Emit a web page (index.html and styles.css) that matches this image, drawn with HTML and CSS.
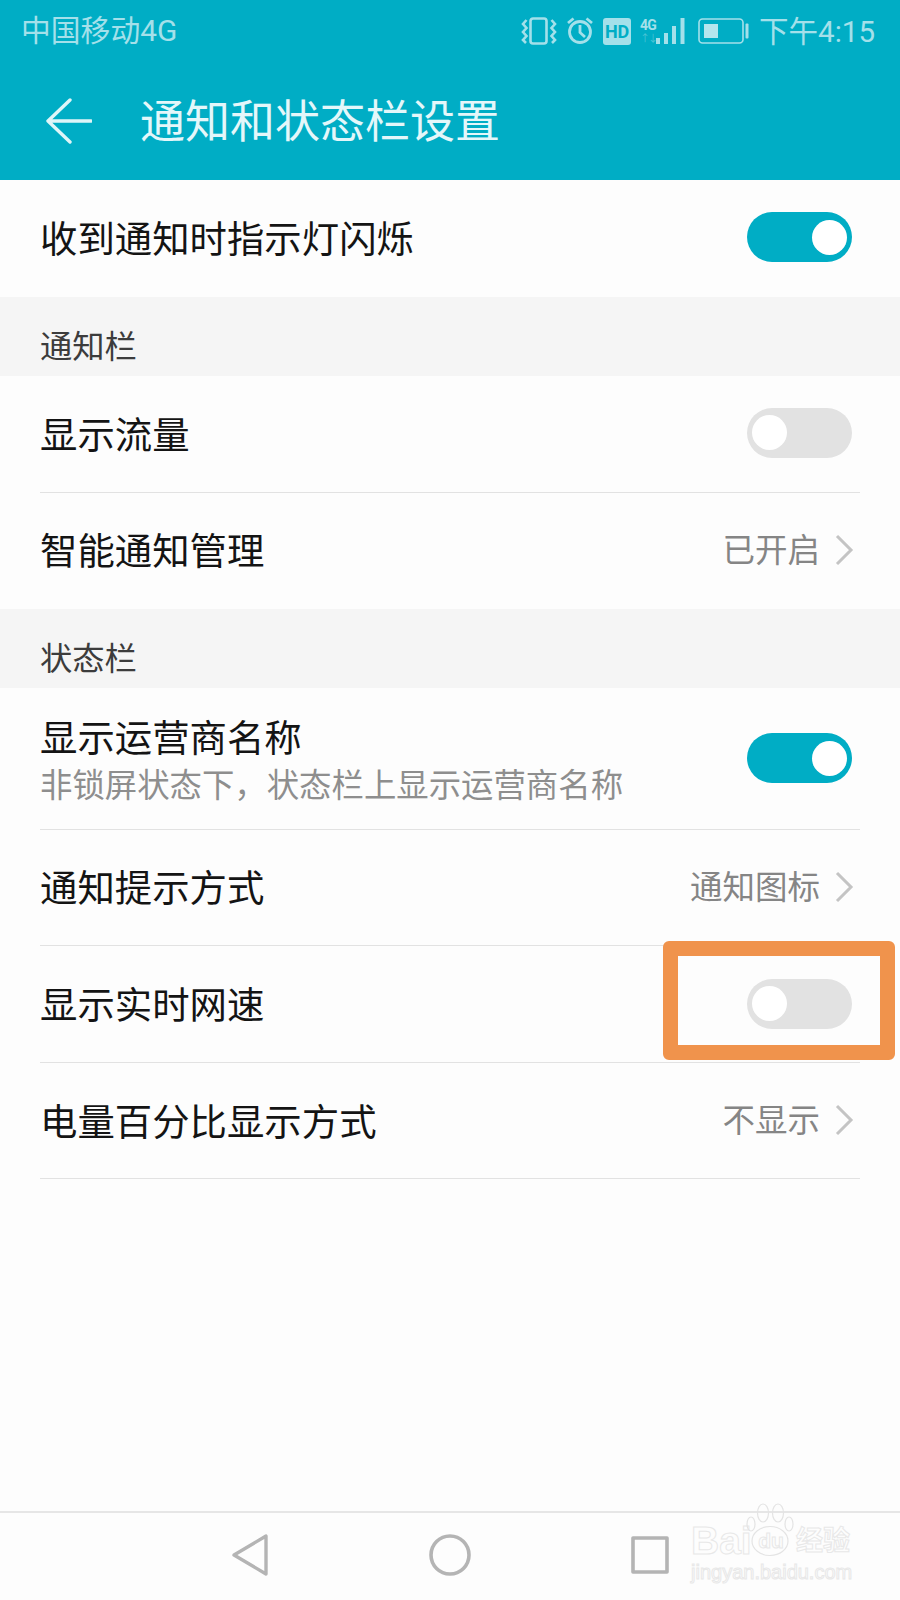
FILE: index.html
```html
<!DOCTYPE html>
<html lang="zh">
<head>
<meta charset="utf-8">
<title>通知和状态栏设置</title>
<link rel="stylesheet" href="styles.css">
</head>
<body>
<div class="app">
  <header class="head">
    <div class="status">
      <span class="carrier">中国移动4G</span>
      <div class="status-right">
        <svg class="ic-vib" width="36" height="28" viewBox="0 0 36 28" fill="none" stroke="#a4e0ea" stroke-width="2.600">
          <rect x="9.500" y="1.500" width="16" height="25" rx="2.500"/>
          <path d="M5.500 3 L2 7 L5.500 11 L2 15 L5.500 19 L2 23 L5 26"/>
          <path d="M30.500 3 L34 7 L30.500 11 L34 15 L30.500 19 L34 23 L31 26"/>
        </svg>
        <svg class="ic-alarm" width="28" height="28" viewBox="0 0 28 28" fill="none" stroke="#a4e0ea" stroke-width="2.800">
          <circle cx="14" cy="15" r="10.500"/>
          <path d="M14 8 V15.500 L19 20"/>
          <path d="M2 6 L7.500 1.500 M26 6 L20.500 1.500"/>
        </svg>
        <span class="hd">HD</span>
        <div class="signal">
          <div class="net"><span class="net-g">4G</span><span class="net-a">↑↓</span></div>
          <svg width="29" height="28" viewBox="0 0 29 28" fill="#a4e0ea">
            <rect x="0" y="21" width="4" height="6"/>
            <rect x="8" y="16" width="4" height="11"/>
            <rect x="16" y="9" width="4" height="18"/>
            <rect x="24.500" y="1" width="4" height="26"/>
          </svg>
        </div>
        <svg class="ic-bat" width="51" height="26" viewBox="0 0 51 26" fill="none">
          <rect x="1" y="1" width="44" height="24" rx="3.500" stroke="#a4e0ea" stroke-width="1.600"/>
          <rect x="6" y="6" width="14" height="14" fill="#b4e6ee"/>
          <rect x="47.500" y="5.500" width="3" height="15" rx="1" fill="#a4e0ea"/>
        </svg>
        <span class="clock">下午4:15</span>
      </div>
    </div>
    <div class="bar">
      <svg class="back" width="46" height="46" viewBox="0 0 46 46" fill="none" stroke="#dff5f8" stroke-width="3.400" stroke-linecap="round" stroke-linejoin="round">
        <path d="M24 2 L2 23 L24 44 M3 23 H45"/>
      </svg>
      <span class="title">通知和状态栏设置</span>
    </div>
  </header>

  <main class="list">
    <div class="row row-top">
      <span class="label">收到通知时指示灯闪烁</span>
      <span class="sw sw-on"><i class="knob"></i></span>
    </div>

    <h2 class="section">通知栏</h2>
    <div class="row row-line">
      <span class="label">显示流量</span>
      <span class="sw"><i class="knob"></i></span>
    </div>
    <div class="row">
      <span class="label">智能通知管理</span>
      <span class="value">已开启<svg class="chev" width="19" height="32" viewBox="0 0 19 32" fill="none" stroke="#c4c4c4" stroke-width="3"><path d="M2 2 L16 16 L2 30"/></svg></span>
    </div>

    <h2 class="section">状态栏</h2>
    <div class="row row-tall row-line">
      <div class="stack">
        <span class="label">显示运营商名称</span>
        <span class="sub">非锁屏状态下，状态栏上显示运营商名称</span>
      </div>
      <span class="sw sw-on"><i class="knob"></i></span>
    </div>
    <div class="row row-line">
      <span class="label">通知提示方式</span>
      <span class="value">通知图标<svg class="chev" width="19" height="32" viewBox="0 0 19 32" fill="none" stroke="#c4c4c4" stroke-width="3"><path d="M2 2 L16 16 L2 30"/></svg></span>
    </div>
    <div class="row row-line">
      <span class="label">显示实时网速</span>
      <span class="sw sw-low"><i class="knob"></i></span>
    </div>
    <div class="row row-line">
      <span class="label label-low">电量百分比显示方式</span>
      <span class="value">不显示<svg class="chev" width="19" height="32" viewBox="0 0 19 32" fill="none" stroke="#c4c4c4" stroke-width="3"><path d="M2 2 L16 16 L2 30"/></svg></span>
    </div>
  </main>

  <nav class="nav">
    <svg width="38" height="44" viewBox="0 0 38 44" fill="none" stroke="#b4b4b4" stroke-width="3.400" stroke-linejoin="round"><path d="M35 3 V41 L3 22 Z"/></svg>
    <svg width="42" height="42" viewBox="0 0 42 42" fill="none" stroke="#b4b4b4" stroke-width="3.600"><circle cx="21" cy="21" r="19"/></svg>
    <svg width="38" height="38" viewBox="0 0 38 38" fill="none" stroke="#b4b4b4" stroke-width="3.600" stroke-linejoin="round"><rect x="2" y="2" width="34" height="34"/></svg>
  </nav>

  <div class="mark" aria-hidden="true"></div>
  <div class="wm">
    <svg class="paw" width="48" height="54" viewBox="0 0 48 54" fill="none" stroke="#e4e4e4" stroke-width="1.200">
      <ellipse cx="17" cy="10" rx="5.500" ry="9"/>
      <ellipse cx="32" cy="10" rx="5.500" ry="9"/>
      <ellipse cx="5" cy="21" rx="4" ry="7"/>
      <ellipse cx="43" cy="21" rx="4" ry="7"/>
      <ellipse cx="24" cy="38" rx="18" ry="14.500"/>
    </svg>
    <div class="wm-top"><span class="wm-bai">Bai</span><span class="wm-du">du</span><span class="wm-cn">经验</span></div>
    <div class="wm-url">jingyan.baidu.com</div>
  </div>
</div>
</body>
</html>
```

FILE: styles.css
```css
* { box-sizing: border-box; }
html, body { margin: 0; padding: 0; }
body {
  width: 900px;
  height: 1600px;
  overflow: hidden;
  font-family: Roboto, "Noto Sans CJK SC", sans-serif;
  background: #fdfdfd;
}
.app {
  position: relative;
  width: 900px;
  height: 1600px;
  display: flex;
  flex-direction: column;
  background: #fdfdfd;
}
.head {
  height: 180px;
  background: #00adc5;
  display: flex;
  flex-direction: column;
  flex: none;
}
.status {
  height: 62px;
  padding: 0 25px 0 21px;
  display: flex;
  align-items: center;
  justify-content: space-between;
  color: #a4e0ea;
}
.carrier { font-size: 29.800px; line-height: 38px; }
.status-right { display: flex; align-items: center; }
.ic-vib { margin-right: 9px; }
.ic-alarm { margin-right: 9px; }
.hd {
  width: 28px;
  height: 27px;
  margin-right: 9px;
  border-radius: 3px;
  background: #a4e0ea;
  color: #00adc5;
  font-size: 18px;
  font-weight: 700;
  line-height: 27px;
  text-align: center;
}
.signal { display: flex; align-items: flex-end; margin-right: 13px; }
.net { display: flex; flex-direction: column; width: 16px; }
.net-g { font-size: 14px; line-height: 15px; font-weight: 700; letter-spacing: -1px; }
.net-a { font-size: 10px; line-height: 12px; opacity: .45; letter-spacing: -2px; }
.ic-bat { margin-right: 10px; }
.clock { padding-top: 2px; font-size: 29.500px; line-height: 38px; }
.bar {
  flex: 1;
  display: flex;
  align-items: center;
  padding: 0 0 0 46px;
}
.back { flex: none; margin-right: 48px; }
.title { margin-top: 4px; color: #e4f7fa; font-size: 45px; line-height: 56px; }
.list { display: flex; flex-direction: column; }
.row {
  position: relative;
  height: 116.500px;
  padding: 0 48px 0 40px;
  display: flex;
  align-items: center;
  justify-content: space-between;
}
.row-top { height: 117px; }
.row-tall { height: 141.500px; }
.row-line::after {
  content: "";
  position: absolute;
  left: 40px;
  right: 40px;
  bottom: 0;
  height: 1px;
  background: #e2e2e2;
}
.label { margin-top: 3px; color: #141414; font-size: 37.400px; line-height: 50px; }
.label-low { margin-top: 5px; }
.section {
  margin: 0;
  height: 79px;
  padding: 28px 0 0 40px;
  background: #f5f5f5;
  color: #3c3c3c;
  font-size: 32.300px;
  font-weight: 400;
  line-height: 44px;
}
.stack { display: flex; flex-direction: column; padding-top: 8px; }
.stack .label { margin-top: 0; line-height: 46px; }
.sub { margin-top: 1px; color: #8e8e8e; font-size: 32.400px; line-height: 46px; }
.value {
  display: flex;
  align-items: center;
  color: #858585;
  font-size: 32.500px;
  line-height: 44px;
}
.chev { margin: 0 -2px 2px 15px; }
.sw {
  position: relative;
  width: 105px;
  height: 50px;
  margin-bottom: 3px;
  border-radius: 25px;
  background: #e2e2e2;
}
.sw-on { background: #00adc5; }
.row-tall .sw { margin-bottom: 1px; }
.sw-low { margin-bottom: 1px; }
.knob {
  position: absolute;
  left: 5px;
  top: 7.500px;
  width: 35px;
  height: 35px;
  border-radius: 50%;
  background: #fff;
}
.sw-on .knob { left: auto; right: 5px; }
.nav {
  margin-top: auto;
  height: 89px;
  flex: none;
  border-top: 2px solid #e6e6e6;
  display: flex;
  align-items: center;
}
.nav svg { position: absolute; }
.nav svg:nth-child(1) { left: 231px; top: 1533px; }
.nav svg:nth-child(2) { left: 429px; top: 1534px; }
.nav svg:nth-child(3) { left: 631px; top: 1536px; }
.mark {
  position: absolute;
  left: 663px;
  top: 941px;
  width: 232px;
  height: 119px;
  border: 15px solid #f0934c;
  border-radius: 6px;
}
.wm {
  position: absolute;
  left: 691px;
  top: 1503px;
  width: 162px;
  padding-top: 20px;
  color: transparent;
  -webkit-text-stroke: 1px #e8e8e8;
}
.paw { position: absolute; left: 55px; top: 0; }
.wm-top {
  display: flex;
  align-items: center;
  height: 36px;
  font-family: "Liberation Sans", "Noto Sans CJK SC", sans-serif;
  font-weight: 700;
  line-height: 36px;
}
.wm-bai { width: 62px; font-size: 39px; }
.wm-du { width: 36px; font-size: 21px; text-align: center; }
.wm-cn { margin-left: 7px; font-size: 27px; white-space: nowrap; }
.wm-url {
  margin-top: 1px;
  font-family: "Liberation Sans", sans-serif;
  font-size: 20px;
  line-height: 24px;
  white-space: nowrap;
}
```
